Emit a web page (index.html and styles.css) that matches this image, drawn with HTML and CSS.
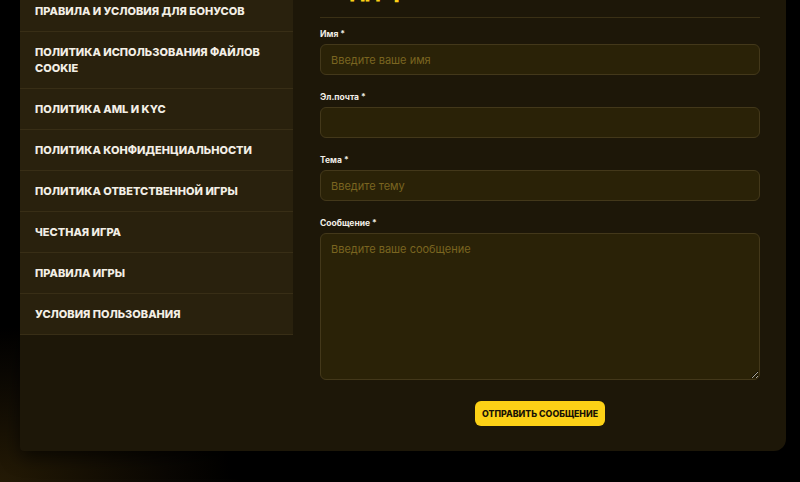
FILE: index.html
```html
<!DOCTYPE html>
<html lang="ru">
<head>
    <meta charset="UTF-8">
    <meta name="viewport" content="width=device-width, initial-scale=1.0">
    <title>Поддержка</title>
    <link rel="stylesheet" href="styles.css">
</head>
<body>
    <div class="page">
        <div class="info-box">
            <aside class="side-menu">
                <a class="side-link" href="#">О компании</a>
                <a class="side-link" href="#">Правила и условия для бонусов</a>
                <a class="side-link" href="#">Политика использования файлов cookie</a>
                <a class="side-link" href="#">Политика AML и KYC</a>
                <a class="side-link" href="#">Политика конфиденциальности</a>
                <a class="side-link" href="#">Политика ответственной игры</a>
                <a class="side-link" href="#">Честная игра</a>
                <a class="side-link" href="#">Правила игры</a>
                <a class="side-link" href="#">Условия пользования</a>
            </aside>

            <section class="contact">
                <h2 class="contact-title">Поддержка</h2>
                <form class="contact-form" onsubmit="return false;">
                    <div class="field">
                        <label for="name">Имя *</label>
                        <input type="text" id="name" placeholder="Введите ваше имя">
                    </div>
                    <div class="field">
                        <label for="email">Эл.почта *</label>
                        <input type="email" id="email">
                    </div>
                    <div class="field">
                        <label for="subject">Тема *</label>
                        <input type="text" id="subject" placeholder="Введите тему">
                    </div>
                    <div class="field">
                        <label for="message">Сообщение *</label>
                        <textarea id="message" placeholder="Введите ваше сообщение"></textarea>
                    </div>
                    <div class="form-actions">
                        <button type="submit" class="send-btn">Отправить сообщение</button>
                    </div>
                </form>
            </section>
        </div>
    </div>
</body>
</html>
```

FILE: styles.css
```css
html, body {
    height: 100%;
}

body {
    margin: 0;
    font-family: 'Inter', 'Noto Sans', sans-serif;
    background: radial-gradient(ellipse 240px 160px at 0% 100%, #241a05 0%, #0a0703 70%, #000 100%), #000;
    color: #fff;
    overflow: hidden;
}

.page {
    padding: 0 14px 0 20px;
}

.info-box {
    margin-top: -50px;
    display: grid;
    grid-template-columns: 273px 1fr;
    background: #1d1708;
    border-radius: 0 0 12px 4px;
    box-shadow: 0 6px 18px rgba(0, 0, 0, 0.6);
}

/* side menu */
.side-menu {
    display: flex;
    flex-direction: column;
    align-self: start;
    background: #29210d;
}

.side-link {
    display: block;
    padding: 12px 15px;
    border-bottom: 1px solid #382e16;
    color: #f3efe6;
    text-decoration: none;
    text-transform: uppercase;
    font-size: 11px;
    line-height: 16px;
    font-weight: 800;
    letter-spacing: 0;
}

/* contact form */
.contact {
    padding: 26px 26px 25px 27px;
}

.contact-title {
    margin: 0;
    padding-bottom: 13px;
    border-bottom: 1px solid #3a3015;
    color: #fcd116;
    font-size: 22px;
    line-height: 28px;
    font-weight: 800;
}

.contact-form {
    padding-top: 10px;
}

.field {
    display: flex;
    flex-direction: column;
    gap: 4px;
    margin-bottom: 16px;
}

.field label {
    font-size: 8.5px;
    line-height: 12px;
    font-weight: 700;
    color: #f1eee6;
}

.field input,
.field textarea {
    box-sizing: border-box;
    width: 100%;
    background: #2a2207;
    border: 1px solid #43381a;
    border-radius: 6px;
    color: #e8dcb0;
    font-family: 'Inter', 'Noto Sans', sans-serif;
    font-size: 11px;
    outline: none;
}

.field input {
    height: 31px;
    padding: 0 10px;
}

.field textarea {
    height: 147px;
    padding: 8px 10px;
    resize: vertical;
}

.field input::placeholder,
.field textarea::placeholder {
    color: #7a6520;
}

.form-actions {
    display: flex;
    justify-content: center;
    padding-top: 5px;
}

.send-btn {
    height: 25px;
    padding: 0 7px;
    background: #fcd116;
    border: none;
    border-radius: 6px;
    color: #1a1405;
    font-family: 'Inter', 'Noto Sans', sans-serif;
    font-size: 8.8px;
    font-weight: 800;
    text-transform: uppercase;
    cursor: pointer;
}
```
